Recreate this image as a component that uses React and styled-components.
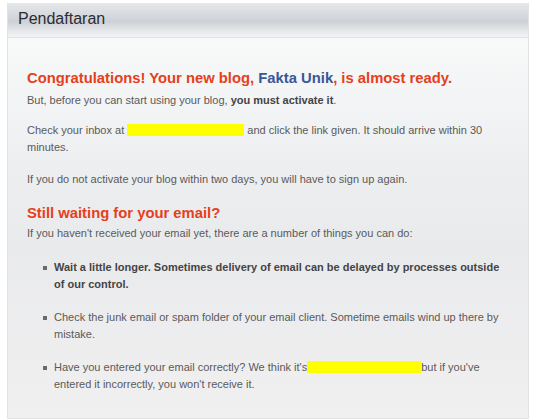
import React from "react";
import styled, { createGlobalStyle } from "styled-components";

const Global = createGlobalStyle`
  html, body { margin: 0; padding: 0; background: #ffffff; }
  body { font-family: "Liberation Sans", Arial, sans-serif; }
`;

const Panel = styled.div`
  margin: 3px 6px 2px 7px;
  border: 1px solid #e2e3e6;
  border-top: none;
  display: flex;
  flex-direction: column;
`;

const Header = styled.div`
  height: 35px;
  padding-left: 10px;
  display: flex;
  align-items: center;
  background: linear-gradient(#e6e8eb 0%, #d6d9de 35%, #cdd1d7 55%, #e4e6e9 80%, #f3f4f5 100%);
  border-bottom: 1px solid #dfe0e2;
  color: #2c2c30;
  font-size: 16px;
  padding-bottom: 2px;
  box-sizing: border-box;
`;

const Body = styled.div`
  padding: 30px 20px 25px 19px;
  background: linear-gradient(#f8f9f9 0%, #eceef0 35%, #e9eaec 55%, #eeeeef 85%, #f0f0f0 100%);
  color: #5a5a5a;
  font-size: 11px;
  line-height: 17px;
`;

const Title = styled.h2`
  margin: 0 0 ${(p) => p.$gap}px;
  font-size: 14.8px;
  line-height: 20px;
  font-weight: bold;
  color: #e5401b;
`;

const Blog = styled.span`
  color: #3a5796;
`;

const Para = styled.p`
  margin: 0 0 ${(p) => p.$gap}px;
`;

const Strong = styled.b`
  color: #444;
`;

const Hidden = styled.span`
  display: inline-block;
  width: ${(p) => p.$w}px;
  height: 12px;
  vertical-align: -2px;
  background: #ffff00;
`;

const List = styled.ul`
  margin: 17px 0 0;
  padding: 0 0 0 27px;
  list-style: none;
`;

const Item = styled.li`
  position: relative;
  margin-bottom: 16px;
  font-weight: ${(p) => (p.$bold ? "bold" : "normal")};
  color: ${(p) => (p.$bold ? "#444" : "#5a5a5a")};
  &:last-child { margin-bottom: 0; }
  &::before {
    content: "";
    position: absolute;
    left: -11px;
    top: 7px;
    width: 4px;
    height: 4px;
    background: #6a6a6a;
  }
`;

export default function App() {
  return (
    <>
      <Global />
      <Panel>
        <Header>Pendaftaran</Header>
        <Body>
          <Title $gap={4}>
            Congratulations! Your new blog, <Blog>Fakta Unik</Blog>, is almost ready.
          </Title>
          <Para $gap={13}>
            But, before you can start using your blog, <Strong>you must activate it</Strong>.
          </Para>
          <Para $gap={15}>
            Check your inbox at <Hidden $w={117} /> and click the link given. It should arrive within 30 minutes.
          </Para>
          <Para $gap={15}>
            If you do not activate your blog within two days, you will have to sign up again.
          </Para>
          <Title $gap={2}>Still waiting for your email?</Title>
          <Para $gap={0}>
            If you haven't received your email yet, there are a number of things you can do:
          </Para>
          <List>
            <Item $bold>
              Wait a little longer. Sometimes delivery of email can be delayed by processes outside of our control.
            </Item>
            <Item>
              Check the junk email or spam folder of your email client. Sometime emails wind up there by mistake.
            </Item>
            <Item>
              Have you entered your email correctly? We think it's<Hidden $w={114} />but if you've entered it incorrectly, you won't receive it.
            </Item>
          </List>
        </Body>
      </Panel>
    </>
  );
}
